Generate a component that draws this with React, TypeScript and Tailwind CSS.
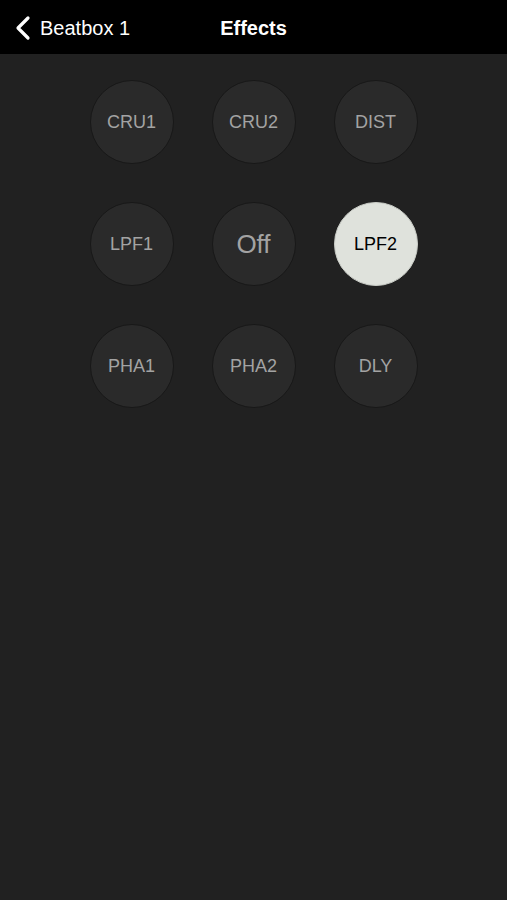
const effects = ["CRU1", "CRU2", "DIST", "LPF1", "Off", "LPF2", "PHA1", "PHA2", "DLY"]

export default function App() {
    const active = "LPF2"
    return (
        <main className="min-h-[900px] bg-[#212121] font-['Liberation_Sans',Arial,sans-serif]">
            {/* Nav bar */}
            <header className="relative flex h-[54px] items-center bg-black">
                <button className="flex items-center gap-[8px] pl-[14px] pt-[2px] text-[20px] text-white">
                    <svg width="18" height="26" viewBox="0 0 18 26" fill="none">
                        <path d="M14 3 L4 13 L14 23" stroke="white" strokeWidth="3.2" strokeLinecap="round" strokeLinejoin="round" />
                    </svg>
                    <span>Beatbox 1</span>
                </button>
                <h1 className="absolute left-1/2 top-[13px] -translate-x-1/2 text-[20px] font-bold text-white">Effects</h1>
            </header>
            {/* Effect pads */}
            <div className="mx-auto grid w-[328px] grid-cols-3 gap-[38px] pt-[26px]">
                {effects.map((name) => (
                    <button
                        key={name}
                        className={`flex h-[84px] w-[84px] items-center justify-center rounded-full border ${
                            name === active
                                ? "border-[#c9ccc6] bg-[#dfe2dc] text-[18px] text-black"
                                : "border-[#181818] bg-[#2a2a2a] text-[#a3a3a3] " + (name === "Off" ? "text-[26px]" : "text-[18px]")
                        }`}
                    >
                        {name}
                    </button>
                ))}
            </div>
        </main>
    )
}
